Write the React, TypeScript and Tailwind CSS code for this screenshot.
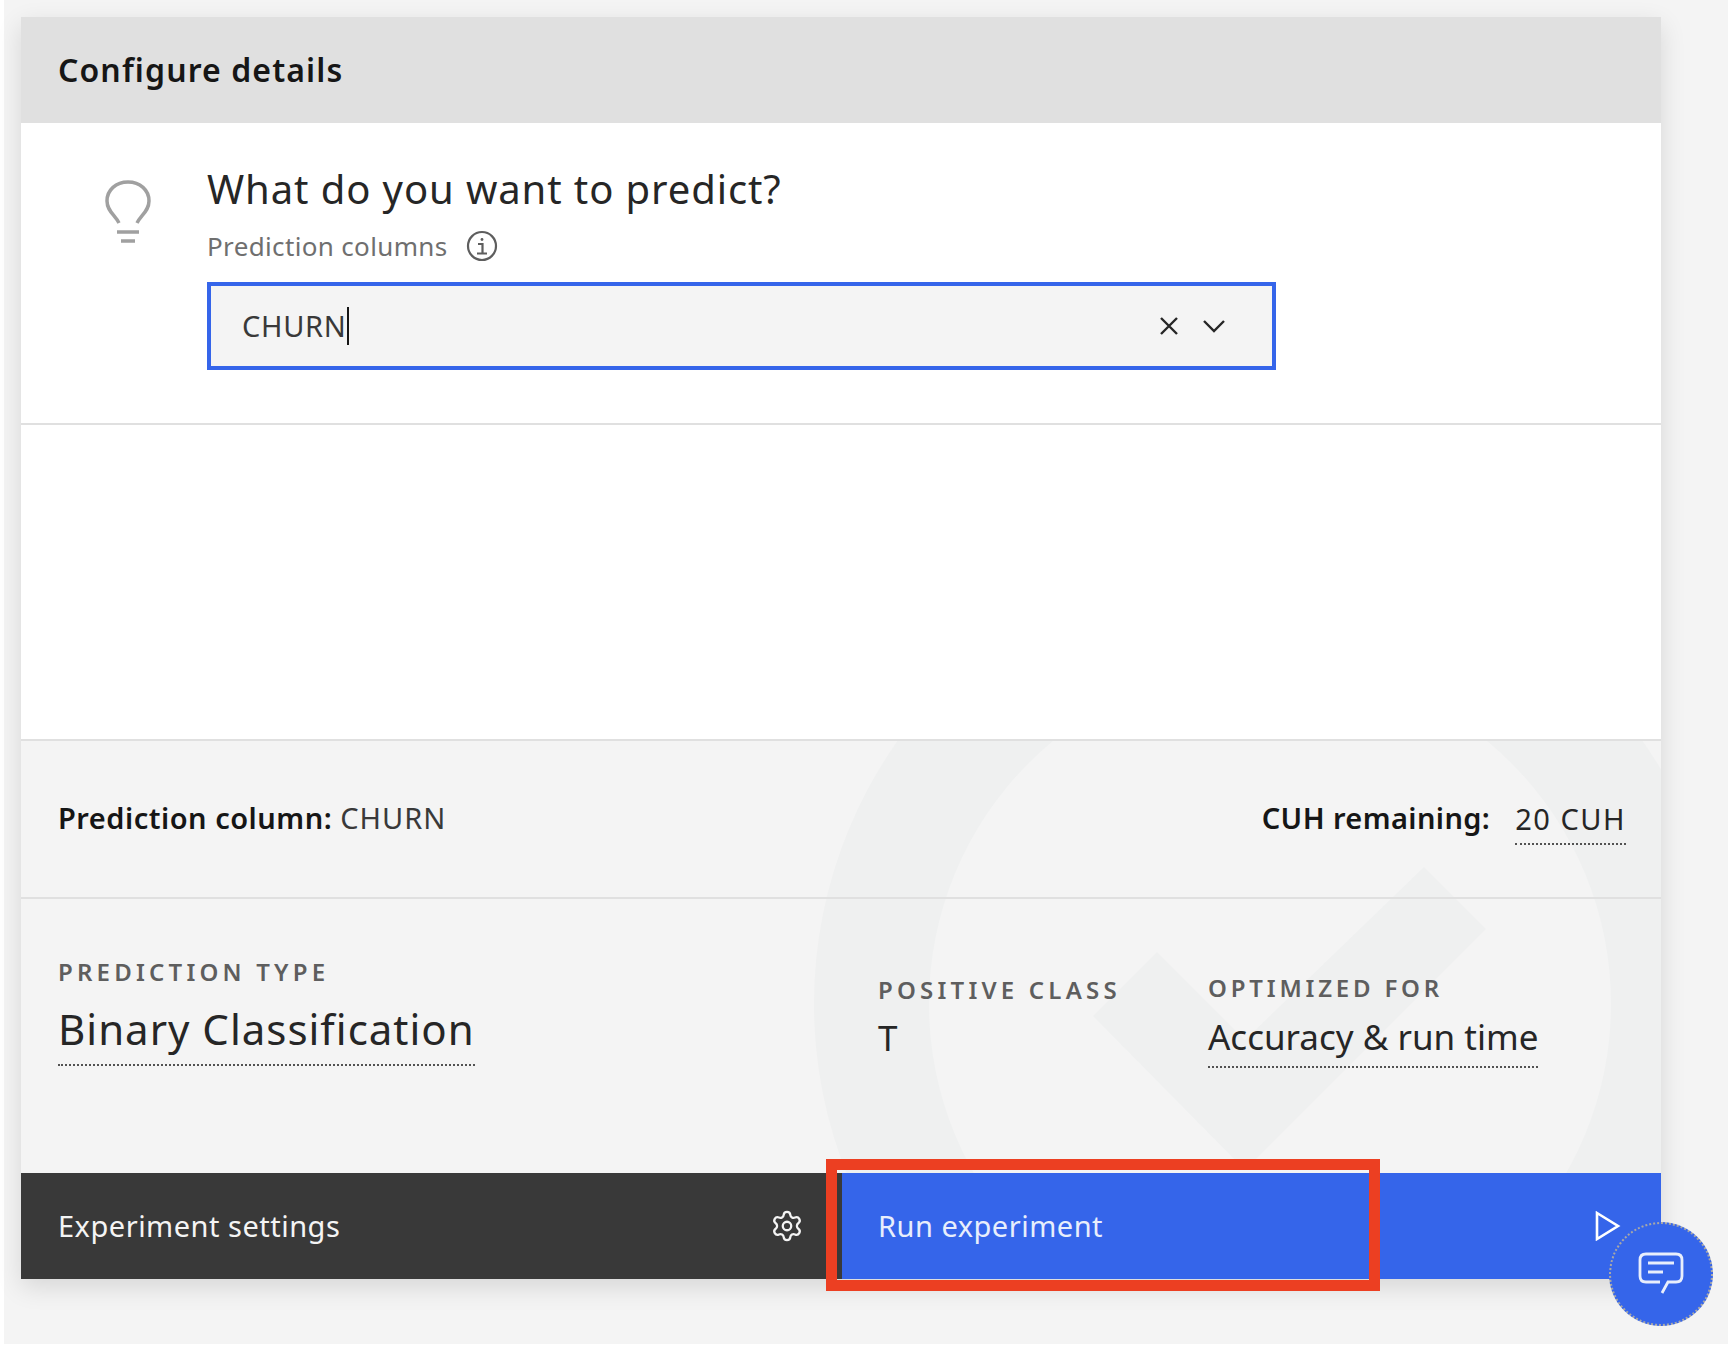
import React from 'react';
import { Settings } from 'lucide-react';

function Watermark() {
  return (
    <svg className="absolute left-0 top-0 pointer-events-none" width="1640" height="432" viewBox="21 742 1640 432">
      <circle cx="1270" cy="1005" r="456" fill="#eff0f0" />
      <circle cx="1270" cy="1005" r="341" fill="#f4f4f4" />
      <polygon points="1424,868 1486,930 1245,1171 1093,1017 1157,953 1245,1041" fill="#eff0f0" />
    </svg>
  );
}

function Bulb() {
  return (
    <svg width="46" height="64" viewBox="0 0 46 64" fill="none" stroke="#a0a0a0" strokeWidth="3.5">
      <path d="M14 43 C10 35 2 31 2 21 C2 10 11 2 23 2 C35 2 44 10 44 21 C44 31 36 35 32 43" />
      <path d="M12 52 H34 M16 61 H30" />
    </svg>
  );
}

function InfoIcon() {
  return (
    <svg width="32" height="32" viewBox="0 0 32 32" fill="none" stroke="#5e5e5e" strokeWidth="2.2">
      <circle cx="16" cy="16" r="14" />
      <path d="M12 14 H16.5 V23 M11 23.5 H21" />
      <circle cx="16" cy="9.5" r="1.4" fill="#5e5e5e" stroke="none" />
    </svg>
  );
}

function Dotted({ className, children }: { className: string; children: React.ReactNode }) {
  return <span className={`border-b-2 border-dotted border-[#525252] ${className}`}>{children}</span>;
}

export default function App() {
  return (
    <div className="w-[1728px] h-[1354px] bg-white overflow-hidden font-['Noto_Sans',sans-serif] text-[#262626]">
      <div className="ml-[4px] h-[1344px] bg-[#f4f4f4] pl-[17px] pt-[17px]">
        <div className="relative w-[1640px] shadow-[0_8px_24px_rgba(0,0,0,0.12)]">
          <div className="h-[106px] bg-[#e0e0e0] flex items-center px-[37px]">
            <h2 className="text-[32px] font-semibold tracking-[1.1px] text-[#161616]">Configure details</h2>
          </div>

          <div className="bg-white h-[616px]">
            <div className="h-[302px] border-b-2 border-[#e0e0e0] flex">
              <div className="w-[186px] pl-[84px] pt-[57px]">
                <Bulb />
              </div>
              <div className="pt-[37px]">
                <div className="text-[40px] tracking-[0.9px] leading-[58px] text-[#262626]">What do you want to predict?</div>
                <div className="flex items-center gap-[18px] h-[40px] mt-[8px]">
                  <span className="text-[26px] tracking-[0.35px] text-[#6f6f6f]">Prediction columns</span>
                  <InfoIcon />
                </div>
                <div className="mt-[16px] w-[1069px] h-[88px] border-4 border-[#3565ea] bg-[#f4f4f4] flex items-center pl-[31px] pr-[46px]">
                  <span className="text-[29px] tracking-[0.7px] text-[#393939]">CHURN</span>
                  <span className="w-[2px] h-[38px] bg-[#161616]" />
                  <svg className="ml-auto" width="22" height="22" viewBox="0 0 22 22" fill="none" stroke="#262626" strokeWidth="2.4">
                    <path d="M3 3 L19 19 M19 3 L3 19" />
                  </svg>
                  <svg className="ml-[22px]" width="24" height="14" viewBox="0 0 24 14" fill="none" stroke="#262626" strokeWidth="2.4">
                    <path d="M2 2 L12 12 L22 2" />
                  </svg>
                </div>
              </div>
            </div>
          </div>

          <div className="relative h-[434px] bg-[#f4f4f4] border-t-2 border-[#e0e0e0]">
            <Watermark />
            <div className="relative">
              <div className="h-[158px] border-b-2 border-[#e0e0e0] flex items-center justify-between pl-[37px] pr-[35px] pb-[2px]">
                <div className="text-[29px] tracking-[0.5px]">
                  <span className="font-semibold text-[#161616]">Prediction column:</span> <span className="tracking-[1px] text-[#393939]">CHURN</span>
                </div>
                <div className="flex items-center gap-[25px] text-[29px]">
                  <span className="font-semibold tracking-[0.4px] text-[#161616]">CUH remaining:</span>
                  <Dotted className="tracking-[1.5px] leading-[48px] mt-[4px]">20 CUH</Dotted>
                </div>
              </div>
              <div className="flex pl-[37px]">
                <div className="w-[820px] pt-[58px]">
                  <div className="text-[24px] font-semibold tracking-[4.2px] leading-[30px] text-[#5e5e5e]">PREDICTION TYPE</div>
                  <div className="mt-[10px]">
                    <Dotted className="inline-block text-[42px] tracking-[1px] leading-[64px] pb-[3px]">Binary Classification</Dotted>
                  </div>
                </div>
                <div className="w-[330px] pt-[76px]">
                  <div className="text-[24px] font-semibold tracking-[4.2px] leading-[30px] text-[#5e5e5e]">POSITIVE CLASS</div>
                  <div className="mt-[8px] text-[35px] leading-[50px]">T</div>
                </div>
                <div className="pt-[74px]">
                  <div className="text-[24px] font-semibold tracking-[3.8px] leading-[30px] text-[#5e5e5e]">OPTIMIZED FOR</div>
                  <div className="mt-[8px]">
                    <Dotted className="inline-block text-[35px] leading-[52px] pb-[3px]">Accuracy &amp; run time</Dotted>
                  </div>
                </div>
              </div>
            </div>
          </div>

          <div className="flex h-[106px] text-[29px] tracking-[0.5px] leading-[40px]">
            <div className="w-[821px] bg-[#393939] flex items-center justify-between pl-[37px] pr-[38px] text-[#f4f4f4]">
              <span>Experiment settings</span>
              <Settings size={34} strokeWidth={1.6} />
            </div>
            <div className="flex-1 bg-[#3565ea] flex items-center justify-between pl-[36px] pr-[40px] text-[#e8eefc]">
              <span>Run experiment</span>
              <svg width="26" height="30" viewBox="0 0 26 30" fill="none" stroke="#ffffff" strokeWidth="2.6">
                <path d="M2 2 L23 15 L2 28 Z" />
              </svg>
            </div>
          </div>

          {/* annotation box drawn over the run button */}
          <div className="absolute left-[805px] top-[1142px] w-[554px] h-[132px] border-[11px] border-[#ec3f22]" />

          <div className="absolute left-[1588px] top-[1205px] w-[104px] h-[104px] rounded-full bg-[#3565ea] border-2 border-dotted border-[#a8a8a8] flex items-center justify-center">
            <svg width="46" height="44" viewBox="0 0 46 44" fill="none" stroke="#e8eefc" strokeWidth="2.8">
              <path d="M22 30 H8 Q2 30 2 24 V8 Q2 2 8 2 H38 Q44 2 44 8 V24 Q44 30 38 30 H30 L24 41" />
              <path d="M10 11 H36 M10 20 H25" />
            </svg>
          </div>
        </div>
      </div>
    </div>
  );
}
